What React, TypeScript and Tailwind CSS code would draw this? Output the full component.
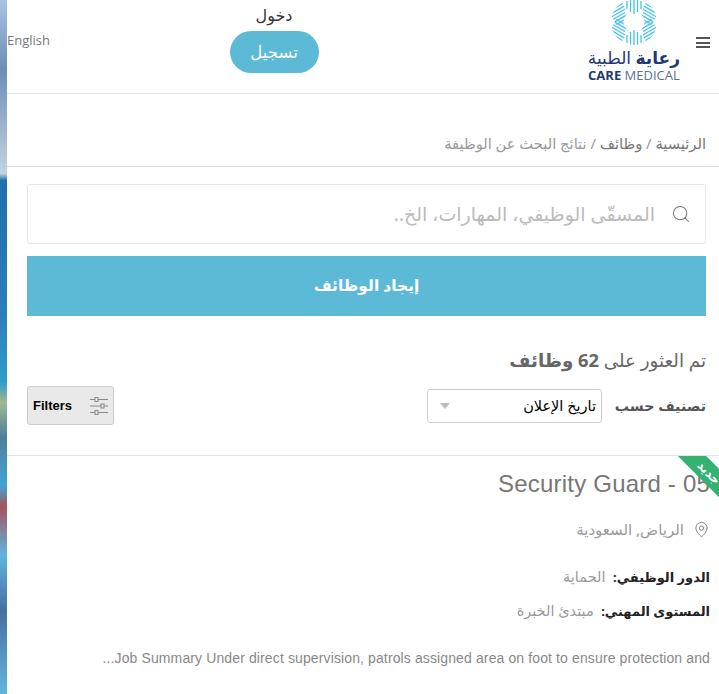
import React from "react";
import { Search, MapPin } from "lucide-react";

const arabic = "font-['Noto_Sans','DejaVu_Sans',sans-serif]";

const Logo = () => {
  const sideGroups = [
    { x: 14.5, y: -8, r: 30 },
    { x: 14.5, y: 8, r: -30 },
    { x: -14.5, y: 8, r: 30 },
    { x: -14.5, y: -8, r: -30 },
  ];
  return (
    <div className="flex flex-col items-center">
      <svg width="48" height="45" viewBox="-24 -22 48 45" className="text-[#45c1ee]">
        <defs>
          <clipPath id="logo-ring">
            <circle cx="0" cy="0" r="23" />
          </clipPath>
        </defs>
        <g stroke="currentColor" strokeWidth="1.3" clipPath="url(#logo-ring)">
          {sideGroups.map((g) => (
            <g key={`${g.x}${g.y}`} transform={`translate(${g.x} ${g.y}) rotate(${g.r})`}>
              {[-7.5, -4.5, -1.5, 1.5, 4.5, 7.5].map((offset) => (
                <line key={offset} x1="-8" y1={offset} x2="8" y2={offset} />
              ))}
            </g>
          ))}
          <circle cx="0" cy="0" r="10.5" fill="#fff" stroke="none" />
          {[0, 180].map((a) => (
            <g key={a} transform={`rotate(${a})`}>
              <rect x="-9" y="-24" width="18" height="15" fill="#fff" stroke="none" />
              <line x1="-7" y1="-13" x2="-7" y2="-21" />
              <line x1="-3.5" y1="-10" x2="-3.5" y2="-23" />
              <line x1="0" y1="-8" x2="0" y2="-23" />
              <line x1="3.5" y1="-10" x2="3.5" y2="-23" />
              <line x1="7" y1="-13" x2="7" y2="-21" />
            </g>
          ))}
        </g>
      </svg>
      <div dir="rtl" className={`${arabic} mt-[2px] text-[17px] leading-[21px] text-[#1e3a70] whitespace-nowrap`}>
        <span className="font-bold">رعاية</span> الطبية
      </div>
      <div className="font-['Open_Sans',sans-serif] text-[13px] leading-[15px] text-[#5b6f98] whitespace-nowrap">
        <span className="font-bold text-[#1e3a70]">CARE</span> MEDICAL
      </div>
    </div>
  );
};

const Header = () => (
  <header className="h-[94px] border-b border-[#e5e5e5] flex items-start relative">
    <a className="font-['Open_Sans',sans-serif] text-[13px] text-[#777] mt-[31px] leading-[18px]">English</a>
    <div className="ml-[179px] mt-[4px] flex flex-col items-center w-[90px]">
      <span className={`${arabic} text-[16px] leading-[22px] text-[#333]`}>دخول</span>
      <button className={`${arabic} mt-[5px] w-[89px] h-[42px] rounded-full bg-[#5dbad6] text-white text-[16.5px]`}>
        تسجيل
      </button>
    </div>
    <div className="ml-auto mr-[39px]">
      <Logo />
    </div>
    <div className="absolute right-[9px] top-[37px] w-[14px] flex flex-col gap-[2.5px]">
      <span className="h-[2px] bg-[#555]" />
      <span className="h-[2px] bg-[#555]" />
      <span className="h-[2px] bg-[#555]" />
    </div>
  </header>
);

const FiltersIcon = () => (
  <svg width="20" height="20" viewBox="0 0 20 20" fill="none" stroke="#888" strokeWidth="1">
    <path d="M1 3.5h5M9 3.5h10M1 10h11M15 10h4M1 16.5h5M9 16.5h10" />
    <rect x="6" y="1.5" width="3" height="4" />
    <rect x="12" y="8" width="3" height="4" />
    <rect x="6" y="14.5" width="3" height="4" />
  </svg>
);

export default function App() {
  return (
    <div className="h-[694px] w-[719px] overflow-hidden flex bg-white">
      {/* strip of the page background photo */}
      <div className="w-[7px] shrink-0 bg-[linear-gradient(180deg,#a9c4e2_0%,#6d8db8_10%,#a8bbd0_20%,#c4d4e0_25%,#1f6fae_26%,#2b7fb8_45%,#2f9bcb_55%,#9fb98f_58%,#4f7f9c_63%,#3fa5d2_70%,#a5535f_73%,#5db4e0_80%,#47709f_88%,#62b5df_100%)]" />
      <div className="flex-1 min-w-0">
        <Header />

        <div dir="rtl" className={`${arabic} h-[73px] border-b border-[#ddd] pt-[38px] pr-[13px] text-[14.7px] leading-[22px] text-[#999]`}>
          <span className="text-[#777]">الرئيسية</span> / <span className="text-[#777]">وظائف</span> / نتائج البحث عن الوظيفة
        </div>

        <div className="px-[20px] pr-[13px]">
          <div dir="rtl" className="mt-[17px] h-[60px] border border-[#e6e6e6] rounded-[3px] flex items-center pr-[14px]">
            <Search size={20} strokeWidth={1.25} className="text-[#777]" />
            <span className={`${arabic} mr-[16px] text-[19px] text-[#bbb]`}>المسقّى الوظيفي، المهارات، الخ..</span>
          </div>
          <button className={`${arabic} mt-[12px] h-[60px] w-full bg-[#5dbad6] text-white font-bold text-[15.5px]`}>
            إيجاد الوظائف
          </button>

          <div dir="rtl" className={`${arabic} mt-[30px] text-[18.3px] leading-[28px] text-[#666]`}>
            تم العثور على <b>62 وظائف</b>
          </div>

          <div dir="rtl" className="mt-[12px] flex items-center h-[39px]">
            <span className={`${arabic} w-[91px] shrink-0 whitespace-nowrap font-bold text-[14.2px] text-[#555]`}>تصنيف حسب</span>
            <div className="mr-[13px] w-[175px] h-[34px] border border-[#ccc] rounded-[3px] flex items-center justify-between pr-[5px] pl-[12px]">
              <span className={`${arabic} text-[14.5px] text-black`}>تاريخ الإعلان</span>
              <span className="border-x-[5px] border-t-[6px] border-x-transparent border-t-[#bbb]" />
            </div>
            <button dir="ltr" className="mr-auto w-[87px] h-[39px] bg-[#e9e9e9] border border-[#ccc] rounded-[3px] flex items-center justify-between pl-[5px] pr-[4px]">
              <span className="font-['Liberation_Sans',sans-serif] font-bold text-[13px] text-black">Filters</span>
              <FiltersIcon />
            </button>
          </div>
        </div>

        <div className="mt-[30px] border-t border-[#e5e5e5] relative overflow-hidden h-[240px]">
          <div className="absolute -right-[36.5px] top-[3.5px] w-[100px] h-[20px] bg-[#35b172] rotate-45 flex items-center justify-center pl-[8px]">
            <span className={`${arabic} text-white font-bold text-[12px] leading-none`}>جديد</span>
          </div>
          <div className="pr-[9px]">
            <h2 dir="rtl" className="font-['Liberation_Sans',sans-serif] mt-[13px] text-[24px] leading-[30px] text-[#777] tracking-[0.2px]">
              Security Guard - 05
            </h2>
            <div dir="rtl" className={`${arabic} mt-[20px] flex items-center gap-[9px] text-[15px] leading-[20px] text-[#999]`}>
              <MapPin size={17} strokeWidth={1.25} className="text-[#777]" />
              <span>الرياض, السعودية</span>
            </div>
            <div dir="rtl" className={`${arabic} mt-[27px] text-[14.5px] leading-[20px] text-[#999]`}>
              <b className="text-[#222] text-[13px]">الدور الوظيفي:</b>&nbsp;&nbsp;الحماية
            </div>
            <div dir="rtl" className={`${arabic} mt-[13px] text-[14.5px] leading-[20px] text-[#999]`}>
              <b className="text-[#222] text-[13px]">المستوى المهني:</b>&nbsp;&nbsp;مبتدئ الخبرة
            </div>
            <p className="font-['Liberation_Sans',sans-serif] mt-[27px] text-right text-[14px] tracking-[0.12px] leading-[20px] text-[#888] whitespace-nowrap">
              ...Job Summary Under direct supervision, patrols assigned area on foot to ensure protection and
            </p>
          </div>
        </div>
      </div>
    </div>
  );
}
